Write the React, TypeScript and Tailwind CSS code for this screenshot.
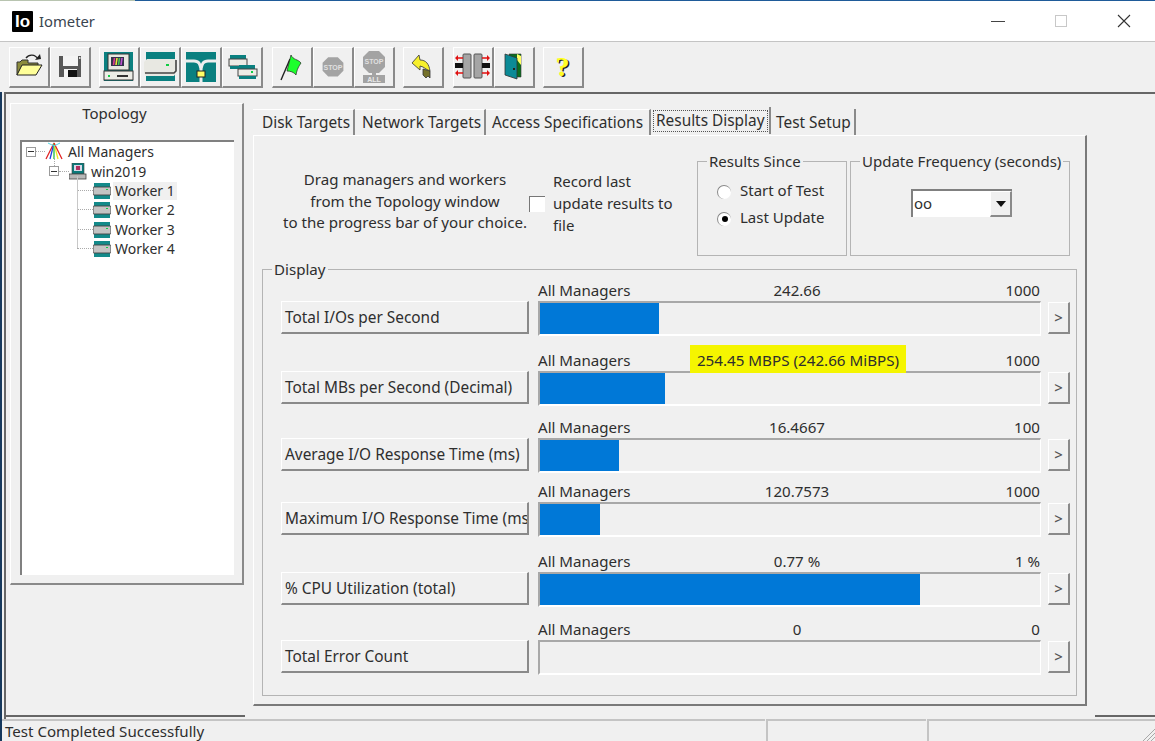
import React from "react";

const font = "font-['Noto_Sans','Open_Sans',sans-serif]";

const Ic = ({ children }: { children: React.ReactNode }) => (
  <svg width="32" height="32" viewBox="0 0 32 32" overflow="visible">{children}</svg>
);

const Open = () => (
  <Ic>
    <path d="M4 24V11h3l2-2h6v3h10v3H9z" fill="#8c8c3c" stroke="#333" strokeWidth="1" />
    <path d="M4 24l5-10h20l-6 10z" fill="#ffff99" stroke="#222" strokeWidth="1" />
    <path d="M13 7c3-4 9-4 12 1" fill="none" stroke="#222" strokeWidth="1.4" />
    <path d="M22 9l6-1-1-5z" fill="#222" />
  </Ic>
);
const Save = () => (
  <Ic>
    <path d="M5 5h22v21H5z" fill="#585858" />
    <rect x="9" y="5" width="15" height="10" fill="#f4f4f4" />
    <rect x="10" y="18" width="13" height="8" fill="#f4f4f4" />
    <rect x="14" y="19" width="9" height="7" fill="#111" />
    <rect x="25" y="6" width="1.5" height="2" fill="#ddd" />
  </Ic>
);
const Manager = () => (
  <Ic>
    <rect x="1" y="1" width="29" height="29" fill="#0a8080" />
    <rect x="5" y="3" width="21" height="16" fill="#e8e8e0" stroke="#333" />
    <rect x="8" y="6" width="13" height="9" fill="#33334a" />
    <path d="M10.5 14l1-7" stroke="#e03a90" strokeWidth="1.6" />
    <path d="M13 14l1-7" stroke="#eee23a" strokeWidth="1.6" />
    <path d="M15.5 14l1-7" stroke="#44c455" strokeWidth="1.6" />
    <path d="M18 14l1-7" stroke="#c050d0" strokeWidth="1.6" />
    <rect x="1" y="20" width="29" height="9" fill="#ecece6" stroke="#333" />
    <rect x="5" y="24" width="2" height="2" fill="#1c4" />
    <rect x="14" y="24" width="11" height="2" fill="#333" />
  </Ic>
);
const Worker = () => (
  <Ic>
    <rect x="2" y="1" width="29" height="29" fill="#0a8080" />
    <path d="M0 11l3-3h29v14l-2 3H2l-2-3z" fill="#e8e8e2" />
    <path d="M1 22h29l2-2V9" fill="none" stroke="#444" strokeWidth="1.6" />
    <rect x="22" y="13" width="3" height="2" fill="#1c4" />
  </Ic>
);
const Network = () => (
  <Ic>
    <rect x="1" y="1" width="30" height="30" fill="#0a8080" />
    <path d="M0 10h9c5 0 6 3 7 8 1-5 2-8 7-8h9" fill="none" stroke="#eee" strokeWidth="3" />
    <path d="M16 18v14" stroke="#eee" strokeWidth="3" />
    <rect x="12" y="20" width="8" height="6" fill="#ffff66" stroke="#222" />
  </Ic>
);
const Copy = () => (
  <Ic>
    <rect x="4" y="4" width="16" height="4" fill="#0a8080" />
    <rect x="3" y="8" width="18" height="7" fill="#ecece6" stroke="#444" />
    <rect x="4" y="15" width="16" height="3" fill="#0a8080" />
    <rect x="13" y="14" width="16" height="4" fill="#0a8080" />
    <rect x="12" y="18" width="19" height="7" fill="#ecece6" stroke="#444" />
    <rect x="13" y="25" width="17" height="3" fill="#0a8080" />
    <rect x="25" y="20" width="2" height="2" fill="#1c4" />
  </Ic>
);
const Flag = () => (
  <Ic>
    <path d="M5 29L14 8" stroke="#222" strokeWidth="1.4" />
    <path d="M15 4c2 5 7 4 10 8-2 3-4 6-5 12-2-3-6-4-9-4z" fill="#1cff2c" stroke="#222" strokeWidth="0.7" />
  </Ic>
);
const Stop = () => (
  <Ic>
    <path d="M10 4h12l7 7v10l-7 7H10l-7-7V11z" transform="translate(3.2 3) scale(.8)" fill="#a3a3a3" />
    <text x="16" y="18.5" textAnchor="middle" fontSize="7" fontFamily="Liberation Sans" fontWeight="700" fill="#e0e0e0">STOP</text>
  </Ic>
);
const StopAll = () => (
  <Ic>
    <path d="M11 0h10l6 6v10l-6 6H11l-6-6V6z" fill="#a3a3a3" />
    <text x="16" y="13" textAnchor="middle" fontSize="7" fontFamily="Liberation Sans" fontWeight="700" fill="#e0e0e0">STOP</text>
    <rect x="14" y="22" width="4" height="2" fill="#a3a3a3" />
    <rect x="5" y="24" width="22" height="8" fill="#a3a3a3" />
    <text x="16" y="31" textAnchor="middle" fontSize="7" fontFamily="Liberation Sans" fontWeight="700" fill="#e8e8e8">ALL</text>
  </Ic>
);
const Back = () => (
  <Ic>
    <path d="M16 18l7 2v7l-2-2-2 2-3-3z" fill="#75712a" stroke="#333" strokeWidth="0.8" />
    <path d="M5 12l7-8 1 5c6 0 9 4 10 11l-4-2-3-2-3-1v4z" fill="#f7f02c" stroke="#333" strokeWidth="0.8" />
  </Ic>
);
const Collapse = () => (
  <Ic>
    <rect x="6" y="3" width="8" height="24" rx="1" fill="#a5a5a5" stroke="#555" />
    <rect x="17" y="3" width="8" height="24" rx="1" fill="#a5a5a5" stroke="#555" />
    <rect x="-2" y="12" width="8" height="5" fill="#111" />
    <rect x="25" y="12" width="8" height="5" fill="#111" />
    <path d="M-1 7h7M25 7h7M-1 22h7M25 22h7" stroke="#e01010" strokeWidth="1.6" />
    <path d="M-2 7l3-3v6zM-2 22l3-3v6zM33 7l-3-3v6zM33 22l-3-3v6z" fill="#e01010" />
  </Ic>
);
const Door = () => (
  <Ic>
    <path d="M11 3h12v23h-5z" fill="#0a7020" stroke="#333" strokeWidth="0.6" />
    <path d="M19 3l4 2v9l-4-5z" fill="#ffff66" />
    <path d="M7 3l12 4v21l-12-4z" fill="#0b8a96" stroke="#333" strokeWidth="0.8" />
    <rect x="15" y="17" width="2" height="2" fill="#222" />
  </Ic>
);
const Help = () => (
  <Ic>
    <text x="17" y="26" textAnchor="middle" fontSize="28" fontFamily="Liberation Serif" fontWeight="700" fill="#222">?</text>
    <text x="15.5" y="25" textAnchor="middle" fontSize="28" fontFamily="Liberation Serif" fontWeight="700" fill="#ffff22">?</text>
  </Ic>
);

const raised = "bg-[#f0f0f0] border-t border-l border-t-white border-l-white border-r-2 border-b-2 border-r-[#8a8a8a] border-b-[#8a8a8a]";

const ToolBtn = ({ children }: { children: React.ReactNode }) => (
  <div className={`w-[41px] h-[41px] flex items-center justify-center ${raised}`}>{children}</div>
);

const Group = ({ children, className }: { children: React.ReactNode; className?: string }) => (
  <div className={`flex ${className ?? ""}`}>{children}</div>
);

const TinyMinus = () => (
  <span className="w-[10px] h-[10px] border border-[#9a9a9a] bg-white flex items-center justify-center shrink-0">
    <span className="w-[6px] h-[1px] bg-[#333]" />
  </span>
);

const AllIcon = () => (
  <svg width="18" height="19" viewBox="0 0 18 19" className="shrink-0">
    <path d="M9 1L1 17" stroke="#e02020" strokeWidth="1.3" />
    <path d="M9 1L5 17" stroke="#2040e0" strokeWidth="1.3" />
    <path d="M9 1v16" stroke="#20c040" strokeWidth="1.3" />
    <path d="M9 1l4 16" stroke="#f0e820" strokeWidth="1.3" />
    <path d="M9 1l8 16" stroke="#e02020" strokeWidth="1.3" />
    <path d="M3 1l6 3 6-3" fill="none" stroke="#50d8e8" strokeWidth="1" />
  </svg>
);
const PcIcon = () => (
  <svg width="18" height="17" viewBox="0 0 18 17" className="shrink-0">
    <rect x="3" y="0" width="12" height="11" fill="#0a7a7a" stroke="#444" strokeWidth="0.6" />
    <rect x="5" y="2" width="8" height="6" fill="#d8d8e8" />
    <rect x="7" y="3" width="4" height="4" fill="#b03060" />
    <rect x="0" y="11" width="17" height="5" fill="#b8b8b8" stroke="#444" strokeWidth="0.8" />
  </svg>
);
const WorkerIcon = () => (
  <svg width="18" height="16" viewBox="0 0 18 16" className="shrink-0">
    <rect x="1" y="0" width="16" height="16" fill="#138a8a" />
    <rect x="0" y="4" width="18" height="8" rx="1" fill="#c4c4c4" stroke="#444" strokeWidth="0.9" />
    <rect x="13" y="6" width="2" height="1" fill="#1c4" />
  </svg>
);

const Worker1 = ({ n, active, className }: { n: number; active?: boolean; className?: string }) => (
  <div className={`h-[19px] flex items-center pl-[55px] ${className ?? ""}`}>
    <span className="w-[16px] border-t border-dotted border-[#aaa] shrink-0" />
    <WorkerIcon />
    <span className={`ml-[2px] px-[2px] h-[18px] flex items-center text-[14px] ${active ? "bg-[#f0f0f0]" : ""}`}>Worker {n}</span>
  </div>
);

const Legend = ({ children, className }: { children: React.ReactNode; className: string }) => (
  <span className={`absolute -top-[11px] px-[2px] bg-[#f0f0f0] leading-[20px] whitespace-nowrap ${className}`}>{children}</span>
);

const rows = [
  { name: "Total I/Os per Second", val: "242.66", max: "1000", w: "w-[119px]", mt: "mt-[11px]" },
  { name: "Total MBs per Second (Decimal)", val: "", max: "1000", w: "w-[125px]", mt: "mt-[15px]", hl: true },
  { name: "Average I/O Response Time (ms)", val: "16.4667", max: "100", w: "w-[79px]", mt: "mt-[12px]" },
  { name: "Maximum I/O Response Time (ms)", val: "120.7573", max: "1000", w: "w-[60px]", mt: "mt-[9px]" },
  { name: "% CPU Utilization (total)", val: "0.77 %", max: "1 %", w: "w-[380px]", mt: "mt-[15px]" },
  { name: "Total Error Count", val: "0", max: "0", w: "w-0", mt: "mt-[13px]" },
];

const tabs = [
  { t: "Disk Targets", w: "w-[102px]", pl: "pl-[9px]" },
  { t: "Network Targets", w: "w-[131px]", pl: "pl-[7px]" },
  { t: "Access Specifications", w: "w-[165px]", pl: "pl-[6px]" },
];

export default function App() {
  return (
    <div className={`${font} relative w-[1155px] h-[741px] overflow-hidden bg-[#f0f0f0] text-[#2e2e2e] text-[15.1px] flex flex-col`}>
      <div className="h-[1px] flex shrink-0">
        <div className="w-[135px] bg-[#b8c4b0]" />
        <div className="flex-1 bg-[#1f5b99]" />
      </div>
      {/* title bar */}
      <div className="h-[41px] shrink-0 bg-white border-b border-[#c4c4c4] flex items-center pl-[12px]">
        <div className="w-[21px] h-[21px] bg-black rounded-[1px] flex items-center justify-center text-white font-bold text-[17px] leading-none font-['Liberation_Sans',sans-serif]">Io</div>
        <span className="ml-[6px] mt-[1px] text-[14.8px] text-[#3a4550]">Iometer</span>
        <div className="ml-auto flex items-center">
          <svg width="14" height="14" viewBox="0 0 14 14"><path d="M0 7.5h14" stroke="#444" /></svg>
          <svg width="14" height="14" viewBox="0 0 14 14" className="ml-[49px]"><rect x="1.5" y="1.5" width="11" height="11" fill="none" stroke="#c8c8c8" /></svg>
          <svg width="14" height="14" viewBox="0 0 14 14" className="ml-[49px] mr-[24px]"><path d="M1 1l12 12M13 1L1 13" stroke="#333" strokeWidth="1.1" /></svg>
        </div>
      </div>
      {/* toolbar */}
      <div className="h-[50px] shrink-0 flex pt-[5px] pl-[9px]">
        <Group><ToolBtn><Open /></ToolBtn><ToolBtn><Save /></ToolBtn></Group>
        <Group className="ml-[8px]"><ToolBtn><Manager /></ToolBtn><ToolBtn><Worker /></ToolBtn><ToolBtn><Network /></ToolBtn><ToolBtn><Copy /></ToolBtn></Group>
        <Group className="ml-[9px]"><ToolBtn><Flag /></ToolBtn><ToolBtn><Stop /></ToolBtn><ToolBtn><StopAll /></ToolBtn></Group>
        <Group className="ml-[8px]"><ToolBtn><Back /></ToolBtn></Group>
        <Group className="ml-[9px]"><ToolBtn><Collapse /></ToolBtn><ToolBtn><Door /></ToolBtn></Group>
        <Group className="ml-[8px]"><ToolBtn><Help /></ToolBtn></Group>
      </div>
      {/* main */}
      <div className="ml-[4px] flex-1 flex flex-col border-t-2 border-l-2 border-[#666]">
        <div className="flex-1 flex">
          {/* topology */}
          <div className={`ml-[4px] mt-[9px] w-[234px] h-[482px] flex flex-col ${raised}`}>
            <div className="h-[18px] pr-[24px] flex items-center justify-center text-[15px]">Topology</div>
            <div className="mx-[9px] mt-[18px] w-[214px] h-[435px] bg-white border-t-2 border-l-2 border-[#808080] text-[14px] relative">
              <div className="h-[19px] flex items-center pl-[4px]">
                <TinyMinus />
                <span className="w-[9px] border-t border-dotted border-[#aaa]" />
                <AllIcon />
                <span className="ml-[5px]">All Managers</span>
              </div>
              <div className="h-[20px] flex items-center pl-[27px]">
                <TinyMinus />
                <span className="w-[10px] border-t border-dotted border-[#aaa]" />
                <PcIcon />
                <span className="ml-[4px]">win2019</span>
              </div>
              <Worker1 n={1} active />
              <Worker1 n={2} />
              <Worker1 n={3} className="mt-[1px]" />
              <Worker1 n={4} />
              {/* tree trunks */}
              <div className="absolute left-[32px] top-[15px] h-[9px] border-l border-dotted border-[#aaa]" />
              <div className="absolute left-[55px] top-[34px] h-[72px] border-l border-[#c8c8c8]" />
            </div>
          </div>
          {/* right side */}
          <div className="ml-[9px] mt-[14px] w-[834px] flex flex-col">
            <div className="h-[27px] flex text-[15.4px]">
              {tabs.map((t) => (
                <div key={t.t} className={`${t.w} ${t.pl} h-[26px] mt-[1px] flex items-center border-t border-t-white border-r-2 border-r-[#8a8a8a] whitespace-nowrap`}>{t.t}</div>
              ))}
              <div className="w-[120px] h-[27px] -mt-[1px] flex items-center pl-[2px] border-r-2 border-r-[#8a8a8a]">
                <span className="w-[115px] h-[22px] flex items-center pl-[2px] border border-dotted border-[#555] whitespace-nowrap">Results Display</span>
              </div>
              <div className="w-[85px] h-[26px] mt-[1px] pt-[2px] pl-[5px] flex items-center border-r-2 border-r-[#8a8a8a] whitespace-nowrap">Test Setup</div>
            </div>
            <div className="w-[834px] h-[571px] border-t border-l border-t-white border-l-white border-r-2 border-b-2 border-r-[#7a7a7a] border-b-[#7a7a7a]">
              <div className="flex pt-[25px] h-[120px]">
                <div className="ml-[26px] mt-[8px] w-[250px] text-center leading-[21.5px] whitespace-nowrap">
                  Drag managers and workers<br />from the Topology window<br />to the progress bar of your choice.
                </div>
                <div className="-ml-[1px] mt-[35px] w-[16px] h-[16px] bg-white border-t border-l border-[#777] shrink-0" />
                <div className="ml-[8px] mt-[9px] w-[130px] leading-[22px] text-[15px]">Record last<br />update results to<br />file</div>
                <div className="relative ml-[14px] w-[150px] h-[95px] border border-[#b4b4b4] pl-[19px] pt-[16px] text-[15px]">
                  <Legend className="left-[9px]">Results Since</Legend>
                  <div className="h-[27px] flex items-center">
                    <span className="w-[14px] h-[14px] rounded-full bg-white border-t border-l border-[#888]" />
                    <span className="ml-[9px] pb-[2px]">Start of Test</span>
                  </div>
                  <div className="h-[27px] flex items-center">
                    <span className="w-[14px] h-[14px] rounded-full bg-white border-t border-l border-[#888] flex items-center justify-center">
                      <span className="w-[6px] h-[6px] rounded-full bg-black" />
                    </span>
                    <span className="ml-[9px] pb-[2px]">Last Update</span>
                  </div>
                </div>
                <div className="relative ml-[3px] w-[220px] h-[95px] border border-[#b4b4b4] pl-[60px] pt-[27px] text-[15px]">
                  <Legend className="left-[9px]">Update Frequency (seconds)</Legend>
                  <div className="w-[101px] h-[28px] flex bg-white border-t-2 border-l-2 border-[#808080]">
                    <span className="flex-1 pl-[1px] leading-[24px]">oo</span>
                    <span className={`w-[22px] flex items-center justify-center ${raised}`}>
                      <svg width="10" height="6" viewBox="0 0 10 6"><path d="M0 0h10L5 6z" fill="#111" /></svg>
                    </span>
                  </div>
                </div>
              </div>
              <div className="relative ml-[8px] mt-[13px] w-[815px] h-[427px] border border-[#b4b4b4]">
                <Legend className="left-[9px]">Display</Legend>
                {rows.map((r) => (
                  <div key={r.name} className={`relative flex h-[55px] ml-[18px] ${r.mt}`}>
                    <div className={`mt-[20px] w-[248px] h-[33px] pl-[3px] pt-[2px] flex items-center overflow-hidden whitespace-nowrap text-[15.4px] ${raised}`}>{r.name}</div>
                    <div className="ml-[9px] w-[532px]">
                      <div className="h-[20px] w-[503px] grid grid-cols-[216px_86px_1fr] leading-[18px] whitespace-nowrap">
                        <span>All Managers</span>
                        <span className="text-center">{r.val}</span>
                        <span className="text-right pr-[1px]">{r.max}</span>
                      </div>
                      <div className="flex">
                        <div className="w-[503px] h-[35px] border-t-2 border-l-2 border-t-[#a8a8a8] border-l-[#a8a8a8] border-r border-b-2 border-r-white border-b-white">
                          <div className={`${r.w} h-[31px] bg-[#0078d7]`} />
                        </div>
                        <div className={`ml-[7px] mt-[1px] w-[22px] h-[32px] flex items-center justify-center ${raised}`}>
                          <span className="text-[15px] font-medium leading-none text-[#555]">&gt;</span>
                        </div>
                      </div>
                    </div>
                    {r.hl && (
                      <div className="absolute left-[409px] -top-[6px] w-[216px] h-[28px] pt-[3px] flex items-center justify-center bg-[#f5f500] whitespace-nowrap text-[15.2px]">254.45 MBPS (242.66 MiBPS)</div>
                    )}
                  </div>
                ))}
              </div>
            </div>
          </div>
        </div>
        <div className="h-[2px] flex shrink-0 mb-[2px]">
          <div className="w-[239px] bg-[#666]" />
          <div className="w-[850px]" />
          <div className="flex-1 bg-[#666]" />
        </div>
      </div>
      {/* status bar */}
      <div className="h-[22px] shrink-0 flex relative">
        <div className="w-[765px] pl-[5px] border-t-2 border-[#c4c4c4] leading-[20px]">Test Completed Successfully</div>
        <div className="ml-[1px] w-[160px] border-t-2 border-l-2 border-[#c4c4c4]" />
        <div className="ml-[1px] flex-1 border-t-2 border-l-2 border-[#c4c4c4]" />
        <svg width="14" height="14" viewBox="0 0 14 14" className="absolute right-0 bottom-0"><path d="M14 2L2 14M14 6L6 14M14 10l-4 4" stroke="#a8a8a8" /></svg>
      </div>
      <div className="absolute left-0 top-[92px] bottom-0 w-[2px] bg-[#16385c]" />
    </div>
  );
}
